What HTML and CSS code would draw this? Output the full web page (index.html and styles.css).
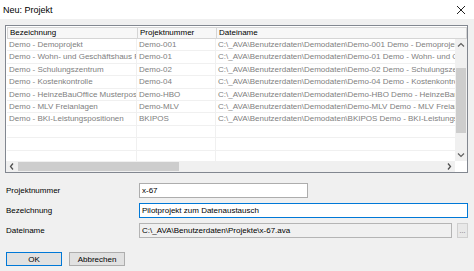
FILE: index.html
```html
<!DOCTYPE html>
<html lang="de">

<head>
    <meta charset="UTF-8">
    <title>Neu: Projekt</title>
    <link rel="stylesheet" href="styles.css">
</head>

<body>
    <div class="titlebar">
        <span class="title">Neu: Projekt</span>
        <svg class="close" width="10" height="10" viewBox="0 0 10 10"><path d="M1 1L9 9M9 1L1 9" stroke="#222" stroke-width="1"/></svg>
    </div>

    <div class="client">
        <div class="list">
            <div class="head">
                <div class="c1">Bezeichnung</div>
                <div class="c2">Projektnummer</div>
                <div class="c3">Dateiname</div>
            </div>
            <div class="middle">
                <div class="rows">
                    <div class="row"><div class="c1">Demo - Demoprojekt</div><div class="c2">Demo-001</div><div class="c3">C:\_AVA\Benutzerdaten\Demodaten\Demo-001 Demo - Demoprojekt</div></div>
                    <div class="row"><div class="c1">Demo - Wohn- und Geschäftshaus Fi</div><div class="c2">Demo-01</div><div class="c3">C:\_AVA\Benutzerdaten\Demodaten\Demo-01 Demo - Wohn- und Geschäftshaus</div></div>
                    <div class="row"><div class="c1">Demo - Schulungszentrum</div><div class="c2">Demo-02</div><div class="c3">C:\_AVA\Benutzerdaten\Demodaten\Demo-02 Demo - Schulungszentrum</div></div>
                    <div class="row"><div class="c1">Demo - Kostenkontrolle</div><div class="c2">Demo-04</div><div class="c3">C:\_AVA\Benutzerdaten\Demodaten\Demo-04 Demo - Kostenkontrolle</div></div>
                    <div class="row"><div class="c1">Demo - HeinzeBauOffice Musterposit</div><div class="c2">Demo-HBO</div><div class="c3">C:\_AVA\Benutzerdaten\Demodaten\Demo-HBO Demo - HeinzeBauOffice</div></div>
                    <div class="row"><div class="c1">Demo - MLV Freianlagen</div><div class="c2">Demo-MLV</div><div class="c3">C:\_AVA\Benutzerdaten\Demodaten\Demo-MLV Demo - MLV Freianlagen</div></div>
                    <div class="row"><div class="c1">Demo - BKI-Leistungspositionen</div><div class="c2">BKIPOS</div><div class="c3">C:\_AVA\Benutzerdaten\Demodaten\BKIPOS Demo - BKI-Leistungspositionen</div></div>
                    <div class="row"><div class="c1"></div><div class="c2"></div><div class="c3"></div></div>
                    <div class="row"><div class="c1"></div><div class="c2"></div><div class="c3"></div></div>
                    <div class="row"><div class="c1"></div><div class="c2"></div><div class="c3"></div></div>
                </div>
                <div class="vscroll">
                    <svg class="arrow" width="12" height="12" viewBox="0 0 12 12"><path d="M3 7.5L6 4.5L9 7.5" fill="none" stroke="#606060" stroke-width="1.2"/></svg>
                    <div class="vtrack"><div class="vthumb"></div></div>
                    <svg class="arrow" width="12" height="12" viewBox="0 0 12 12"><path d="M3 4.5L6 7.5L9 4.5" fill="none" stroke="#606060" stroke-width="1.2"/></svg>
                </div>
            </div>
            <div class="bottom">
                <div class="hscroll">
                    <svg class="arrow" width="12" height="11" viewBox="0 0 12 11"><path d="M7 2.5L4.5 5.5L7 8.5" fill="none" stroke="#505050" stroke-width="1.3"/></svg>
                    <div class="htrack"><div class="hthumb"></div></div>
                    <svg class="arrow" width="12" height="11" viewBox="0 0 12 11"><path d="M5 2.5L7.5 5.5L5 8.5" fill="none" stroke="#505050" stroke-width="1.3"/></svg>
                </div>
                <div class="corner"></div>
            </div>
        </div>

        <div class="form">
            <label>Projektnummer</label>
            <div class="field"><input type="text" class="short" value="x-67"></div>
            <label>Bezeichnung</label>
            <div class="field"><input type="text" class="focus" value="Pilotprojekt zum Datenaustausch"></div>
            <label>Dateiname</label>
            <div class="field"><input type="text" class="readonly" value="C:\_AVA\Benutzerdaten\Projekte\x-67.ava" readonly><button class="browse">...</button></div>
        </div>

        <div class="buttons">
            <button class="default">OK</button>
            <button>Abbrechen</button>
        </div>
    </div>
</body>

</html>
```

FILE: styles.css
```css
body {
    margin: 0;
    width: 474px;
    height: 271px;
    background: #f0f0f0;
    font-family: "Liberation Sans", Arial, sans-serif;
    font-size: 8px;
    color: #000;
    overflow: hidden;
}

.titlebar {
    height: 19px;
    background: #fff;
    display: flex;
    align-items: center;
    justify-content: space-between;
    padding: 0 8px 0 3px;
}

.title {
    font-size: 9px;
}

.client {
    padding: 6px 6px 0 5px;
}

.list {
    height: 146px;
    border: 1px solid #828790;
    background: #fff;
    display: flex;
    flex-direction: column;
}

.head {
    display: flex;
    height: 10px;
    margin: 1px 0 0 1px;
    border: 1px solid #d5d5d5;
    background: #f7f7f7;
    line-height: 10px;
}

.head .c1,
.head .c2 {
    border-right: 1px solid #d5d5d5;
}

.c1,
.c2,
.c3 {
    padding-left: 2px;
    white-space: nowrap;
    overflow: hidden;
    box-sizing: border-box;
}

.c1 {
    width: 130px;
    flex: none;
}

.c2 {
    width: 79px;
    flex: none;
}

.c3 {
    flex: 1;
    min-width: 0;
}

.middle {
    flex: 1;
    display: flex;
    min-height: 0;
}

.rows {
    flex: 1;
    min-width: 0;
    overflow: hidden;
    padding-left: 1px;
}

.row {
    display: flex;
    height: 12.4px;
    line-height: 12px;
    color: #808080;
    border-bottom: 1px solid #f0f0f0;
    box-sizing: border-box;
}

.row .c1,
.row .c2 {
    border-right: 1px solid #f0f0f0;
}

.vscroll {
    width: 12px;
    flex: none;
    display: flex;
    flex-direction: column;
    background: #f0f0f0;
}

.arrow {
    display: block;
    flex: none;
}

.vtrack {
    flex: 1;
    padding: 17px 1px 16px;
}

.vthumb {
    height: 100%;
    background: #cdcdcd;
}

.bottom {
    display: flex;
    height: 11px;
}

.hscroll {
    flex: 1;
    display: flex;
    align-items: center;
    background: #f0f0f0;
}

.htrack {
    flex: 1;
    height: 9px;
}

.hthumb {
    width: 161px;
    height: 100%;
    background: #cdcdcd;
}

.corner {
    width: 12px;
    background: #fff;
}

.form {
    display: grid;
    grid-template-columns: 134px 1fr;
    row-gap: 5px;
    margin-top: 10px;
    align-items: center;
}

label {
    padding-left: 1px;
}

.field {
    display: flex;
    gap: 5px;
}

input {
    font-family: "Liberation Sans", Arial, sans-serif;
    font-size: 8px;
    height: 15px;
    box-sizing: border-box;
    border: 1px solid #adadad;
    background: #fff;
    padding: 0 2px;
    outline: none;
    flex: 1;
    min-width: 0;
}

input.short {
    flex: none;
    width: 169px;
}

input.focus {
    border-color: #0078d7;
}

input.readonly {
    background: #f0f0f0;
    border-color: #b4b4b4;
}

.browse {
    width: 11px;
    height: 15px;
    padding: 0;
    border: 1px solid #cfcfcf;
    background: #e8e8e8;
    color: #666;
    font-size: 7px;
    line-height: 6px;
}

.buttons {
    display: flex;
    gap: 7px;
    margin-top: 14px;
    padding-left: 1px;
}

.buttons button {
    width: 56px;
    height: 14px;
    padding: 0;
    font-family: "Liberation Sans", Arial, sans-serif;
    font-size: 8px;
    background: #e1e1e1;
    border: 1px solid #adadad;
}

.buttons button.default {
    border-color: #0078d7;
}
```
